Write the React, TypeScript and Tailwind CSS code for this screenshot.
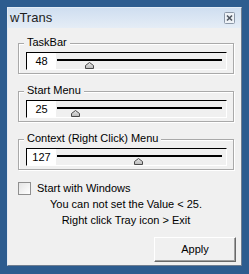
import React from "react";

const font = { fontFamily: '"Liberation Sans", Arial, sans-serif' };

function Thumb({ value }: { value: number }) {
  const left = 4 + value * 0.62 - 4.5;
  return (
    <svg
      className="absolute top-[9px]"
      style={{ left: `${left}px` }}
      width="9"
      height="7"
      viewBox="0 0 9 7"
    >
      <defs>
        <linearGradient id="tg" x1="0" y1="0" x2="0" y2="1">
          <stop offset="0" stopColor="#e8e8e8" />
          <stop offset="1" stopColor="#b8b8b8" />
        </linearGradient>
      </defs>
      <polygon
        points="0.5,6.5 0.5,3.5 4.5,0.5 8.5,3.5 8.5,6.5"
        fill="url(#tg)"
        stroke="#4a4a4a"
        strokeWidth="1"
      />
    </svg>
  );
}

function Group({ label, value }: { label: string; value: number }) {
  return (
    <div className="relative h-[31px] border border-[#a9a9a9] shadow-[inset_1px_1px_0_#ffffff,1px_1px_0_#ffffff] pl-[7px] pr-[6px] pt-[8px]">
      <span className="absolute left-[5px] top-[-8px] bg-[#f0f0f0] px-[3px] text-[11px] leading-[13px] text-black">
        {label}
      </span>
      <div className="flex h-[18px] border border-t-black border-l-black border-r-white border-b-white">
        <div className="w-[29px] bg-white text-center text-[11px] leading-[16px] text-black">
          {value}
        </div>
        <div className="relative flex-1">
          <div className="absolute left-[1px] right-[4px] top-[6px] h-[2px] bg-black" />
          <Thumb value={value} />
        </div>
      </div>
    </div>
  );
}

export default function App() {
  return (
    <div className="w-[249px] h-[274px] bg-[#2d5c8f] pt-[7px] pl-[7px]" style={font}>
      <div className="flex h-[259px] w-[235px] flex-col border border-t-[#e3ebf5] border-l-[#e3ebf5] border-r-[#6e7d90] border-b-[#6e7d90] bg-[#f0f0f0]">
        <div className="flex h-[20px] items-center justify-between bg-gradient-to-b from-[#cfdef0] to-[#e5edf6] pl-[2px] pr-[6px]">
          <span className="text-[13px] leading-[16px] text-[#1e1e1e]">wTrans</span>
          <svg width="11" height="12" viewBox="0 0 11 12">
            <rect x="0.5" y="0.5" width="10" height="11" rx="1" fill="#eef2f7" stroke="#8c98a8" />
            <path d="M3 3.5 L8 8.5 M8 3.5 L3 8.5" stroke="#4f5660" strokeWidth="1.6" />
          </svg>
        </div>
        <div className="flex flex-1 flex-col pl-[10px] pr-[7px] pt-[15px]">
          <Group label="TaskBar" value={48} />
          <div className="mt-[17px]">
            <Group label="Start Menu" value={25} />
          </div>
          <div className="mt-[17px]">
            <Group label="Context (Right Click) Menu" value={127} />
          </div>
          <div className="mt-[12px] flex h-[13px] items-center gap-[6px]">
            <div className="h-[13px] w-[13px] border border-[#8f8f8f] bg-gradient-to-br from-[#e4e4e4] to-[#ffffff]" />
            <span className="text-[11px] leading-[13px] text-black">Start with Windows</span>
          </div>
          <div className="mt-[1px] text-center text-[11px] leading-[16px] text-black">
            You can not set the Value &lt; 25.
          </div>
          <div className="text-center text-[11px] leading-[16px] text-black">
            Right click Tray icon &gt; Exit
          </div>
          <div className="mt-[9px] -mr-[2px] flex justify-end">
            <button className="h-[25px] w-[82px] border border-t-white border-l-white border-r-[#696969] border-b-[#696969] bg-[#f0f0f0] text-[11px] text-black shadow-[inset_-1px_-1px_0_#a0a0a0]">
              Apply
            </button>
          </div>
        </div>
      </div>
    </div>
  );
}
